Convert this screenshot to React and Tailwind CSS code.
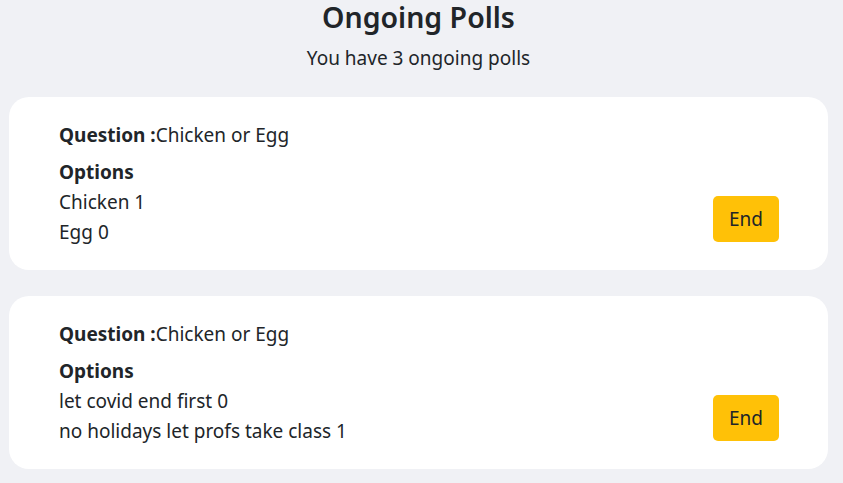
import React from 'react';

const polls = [
  {
    question: 'Chicken or Egg',
    options: [
      { text: 'Chicken', votes: 1 },
      { text: 'Egg', votes: 0 },
    ],
  },
  {
    question: 'Chicken or Egg',
    options: [
      { text: 'let covid end first', votes: 0 },
      { text: 'no holidays let profs take class', votes: 1 },
    ],
  },
];

function PollCard({ poll }) {
  return (
    <div className="bg-white rounded-[20px] pl-[50px] pr-[49px] pt-[24px] pb-[23px] flex items-end justify-between">
      <div>
        <p className="text-[19px] leading-[28px]">
          <span className="font-bold">Question :</span>
          {poll.question}
        </p>
        <p className="text-[19px] leading-[30px] font-bold mt-[8px]">Options</p>
        {poll.options.map((o, i) => (
          <p key={i} className="text-[19px] leading-[30px]">
            {o.text} {o.votes}
          </p>
        ))}
      </div>
      <button className="bg-[#ffc107] rounded-[5px] w-[66px] h-[46px] text-[19px] text-[#212529] mb-[5px]">
        End
      </button>
    </div>
  );
}

export default function App() {
  return (
    <div
      className="min-h-screen bg-[#f0f1f5] text-[#212529] pl-[9px] pr-[15px] pt-[2px]"
      style={{ fontFamily: '"Noto Sans", "Open Sans", sans-serif' }}
    >
      <h1 className="text-center text-[28.5px] font-semibold leading-[30px]">Ongoing Polls</h1>
      <p className="text-center text-[19px] leading-[28px] mt-[12px]">You have 3 ongoing polls</p>
      <div className="flex flex-col gap-[26px] mt-[25px]">
        {polls.map((p, i) => (
          <PollCard key={i} poll={p} />
        ))}
      </div>
    </div>
  );
}
